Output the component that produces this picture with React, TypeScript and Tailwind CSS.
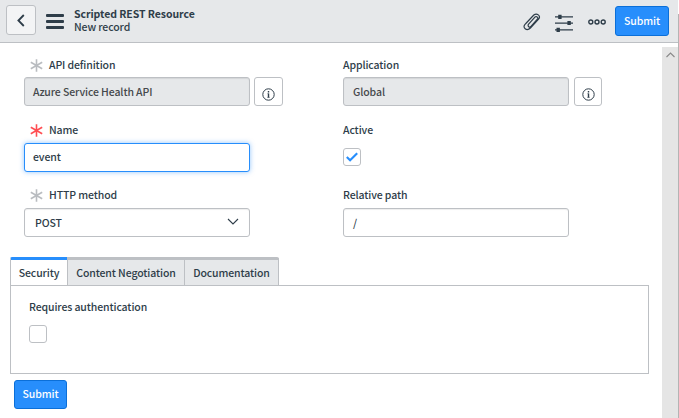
import React from "react";

function RequiredMark({ color }: { color: string }) {
  return (
    <svg width="13" height="13" viewBox="0 0 13 13" fill="none" stroke={color} strokeWidth="1.6" className="mt-px mr-1.5 shrink-0">
      <path d="M6.5 0.3v12.4M0.8 3.3l11.4 6.4M12.2 3.3L0.8 9.7" />
    </svg>
  );
}

function Label({ children, mark }: { children: React.ReactNode; mark?: string }) {
  return (
    <div className="flex h-[18px] items-center">
      {mark && <div className="w-1.5 shrink-0" />}
      {mark && <RequiredMark color={mark} />}
      <span className="whitespace-nowrap">{children}</span>
    </div>
  );
}

function InfoButton({ width }: { width: string }) {
  return (
    <button className={`${width} flex h-[29px] shrink-0 items-center justify-center rounded-[3px] border border-[#bdc0c4] bg-white pt-[5px]`}>
      <svg width="13" height="13" viewBox="0 0 13 13" fill="none" stroke="#2e3d49">
        <circle cx="6.5" cy="6.5" r="5.7" strokeWidth="1" />
        <path d="M6.5 5.5v4M6.5 3v1.4" strokeWidth="1.4" />
        <path d="M5.5 5.6h1M5.3 9.4h2.4" strokeWidth="0.6" />
      </svg>
    </button>
  );
}

function Checkbox({ checked }: { checked?: boolean }) {
  return (
    <div className="flex h-[18px] w-[18px] items-center justify-center rounded-[3px] border border-[#bdc0c4] bg-white">
      {checked && (
        <svg width="12" height="10" viewBox="0 0 12 10" fill="none" stroke="#278efc" strokeWidth="2.1">
          <path d="M0.8 5l3.3 3.3L11.2 1.2" />
        </svg>
      )}
    </div>
  );
}

function SubmitButton({ className }: { className: string }) {
  return (
    <button className={`${className} flex items-center justify-center rounded-[3px] border border-[#0b6fd8] bg-[#278efc] pb-px font-medium text-white`}>
      Submit
    </button>
  );
}

const field = "flex h-[29px] w-[226px] items-center rounded-[3px] border px-2 ";
const disabled = "border-[#bdc0c4] bg-[#e6e8ea] text-[#45484c] shadow-[inset_0_1px_1px_rgba(0,0,0,0.08)]";
const normal = "border-[#bdc0c4] bg-white shadow-[inset_0_1px_1px_rgba(0,0,0,0.07)]";

export default function App() {
  return (
    <div className="flex h-[418px] w-[679px] bg-white font-['Noto_Sans_CJK_SC',sans-serif] text-[10.5px] leading-[14px] font-medium tracking-[-0.11px] text-[#2e3d49]">
      <div className="flex w-[678px] flex-col">
        <header className="flex h-[43px] shrink-0 items-center border-b border-[#bdc0c4] bg-[#e6e8ea]">
          <button className="mb-[2px] ml-1.5 flex h-[30px] w-[30px] items-center justify-center rounded-[3px] border border-[#bdc0c4] bg-[#f3f4f5]">
            <svg width="8" height="13" viewBox="0 0 8 13" fill="none" stroke="#2e3d49" strokeWidth="1.8" className="mt-px">
              <path d="M6.8 1L1.4 6.5l5.4 5.5" />
            </svg>
          </button>
          <div className="ml-2.5 flex w-[18px] flex-col gap-[3px]">
            <div className="h-[3px] rounded-[1px] bg-[#2e3d49]" />
            <div className="h-[3px] rounded-[1px] bg-[#2e3d49]" />
            <div className="h-[3px] rounded-[1px] bg-[#2e3d49]" />
          </div>
          <div className="mb-0.5 ml-2.5 flex-1 leading-[13px]">
            <div className="font-bold tracking-[-0.06px]">Scripted REST Resource</div>
            <div>New record</div>
          </div>
          <svg width="20" height="18" viewBox="0 0 20 18" fill="none" stroke="#2e3d49" strokeWidth="1.2" strokeLinecap="round" strokeLinejoin="round" className="mt-[2px] mr-[13px]">
            <path d="M15.6 5.9L9.2 13.2C7.6 15 5 13.3 6.6 11.2L12.7 4.4M4.3 10L11.8 2C14.8-.4 19.2 2.6 16.6 6.2L8.4 15C4.6 18.6 0 14.6 3 11.3L5.2 9M15.6 5.9C16.4 4.8 14.8 3 13.4 3.7L6.6 11.2" />
          </svg>
          <svg width="18" height="18" viewBox="0 0 18 18" fill="#2e3d49" className="mt-[3px] mr-[15px]">
            <path d="M0 2.2h18v1.3H0zM0 8.4h18v1.3H0zM0 15.2h18v1.3H0zM3.2.8h3.4v4.1H3.2zM12.4 7h3.4v4.1h-3.4zM1.5 13.8h3.4v4.1H1.5z" />
          </svg>
          <svg width="18" height="6" viewBox="0 0 18 6" fill="none" stroke="#2e3d49" strokeWidth="1.4" className="mt-px mr-[9px]">
            <circle cx="2.8" cy="3" r="2" />
            <circle cx="9" cy="3" r="2" />
            <circle cx="15.2" cy="3" r="2" />
          </svg>
          <SubmitButton className="mr-[9px] h-[30px] w-[54px]" />
        </header>

        <div className="flex flex-1">
          <main className="flex w-[662px] flex-col pt-[13px] pl-2.5">
            <div className="flex pl-3.5">
              <div className="w-[319px]">
                <Label mark="#b9bcc0">API definition</Label>
                <div className="mt-[3px] flex gap-1">
                  <div className={field + disabled}>Azure Service Health API</div>
                  <InfoButton width="w-[29px]" />
                </div>
                <div className="mt-[15px]">
                  <Label mark="#ff4d52">Name</Label>
                </div>
                <div className={field + "mt-1 border-[#278efc] bg-white pb-0.5 shadow-[0_0_5px_rgba(39,142,252,0.5)]"}>event</div>
                <div className="mt-3.5">
                  <Label mark="#b9bcc0">HTTP method</Label>
                </div>
                <div className={field + normal + " mt-1 justify-between pl-2.5"}>
                  <span>POST</span>
                  <svg width="12" height="7" viewBox="0 0 12 7" fill="none" stroke="#2e3d49" strokeWidth="1.1" className="mr-0.5 mb-[3px]">
                    <path d="M1 1l5 5 5-5" />
                  </svg>
                </div>
              </div>
              <div>
                <Label>Application</Label>
                <div className="mt-[3px] flex gap-[5px]">
                  <div className={field + disabled + " pl-[9px]"}>Global</div>
                  <InfoButton width="w-[28px]" />
                </div>
                <div className="mt-[15px]">
                  <Label>Active</Label>
                </div>
                <div className="mt-1 flex h-[29px] items-center pb-px">
                  <Checkbox checked />
                </div>
                <div className="mt-3.5">
                  <Label>Relative path</Label>
                </div>
                <div className={field + normal + " mt-1 pl-[9px]"}>/</div>
              </div>
            </div>

            <div className="mt-5 flex h-7">
              <div className="flex w-[57px] items-center justify-center rounded-tl-[2px] border-t-[3px] border-l border-t-[#278efc] border-l-[#bdc0c4]">Security</div>
              <div className="flex w-[118px] items-center justify-center border-t-[3px] border-r border-l border-[#bdc0c4] bg-[#e6e8ea]">Content Negotiation</div>
              <div className="flex w-[94px] items-center justify-center rounded-tr-[2px] border-t-[3px] border-r border-[#bdc0c4] bg-[#e6e8ea]">Documentation</div>
            </div>
            <section className="h-[89px] w-[639px] border border-[#bdc0c4] pt-3 pl-[18px]">
              <Label>Requires authentication</Label>
              <div className="mt-[9px]">
                <Checkbox />
              </div>
            </section>
            <SubmitButton className="mt-1.5 ml-1 h-[29px] w-[53px]" />
          </main>
          <div className="mt-1 flex w-4 justify-center bg-[#e5e5e5] pt-[5px]">
            <svg width="9" height="6" viewBox="0 0 9 6" fill="none" stroke="#888" strokeWidth="1.1">
              <path d="M0.5 5l4-4 4 4" />
            </svg>
          </div>
        </div>
      </div>
      <div className="mt-3.5 w-px bg-[#b4b4b4]" />
    </div>
  );
}
